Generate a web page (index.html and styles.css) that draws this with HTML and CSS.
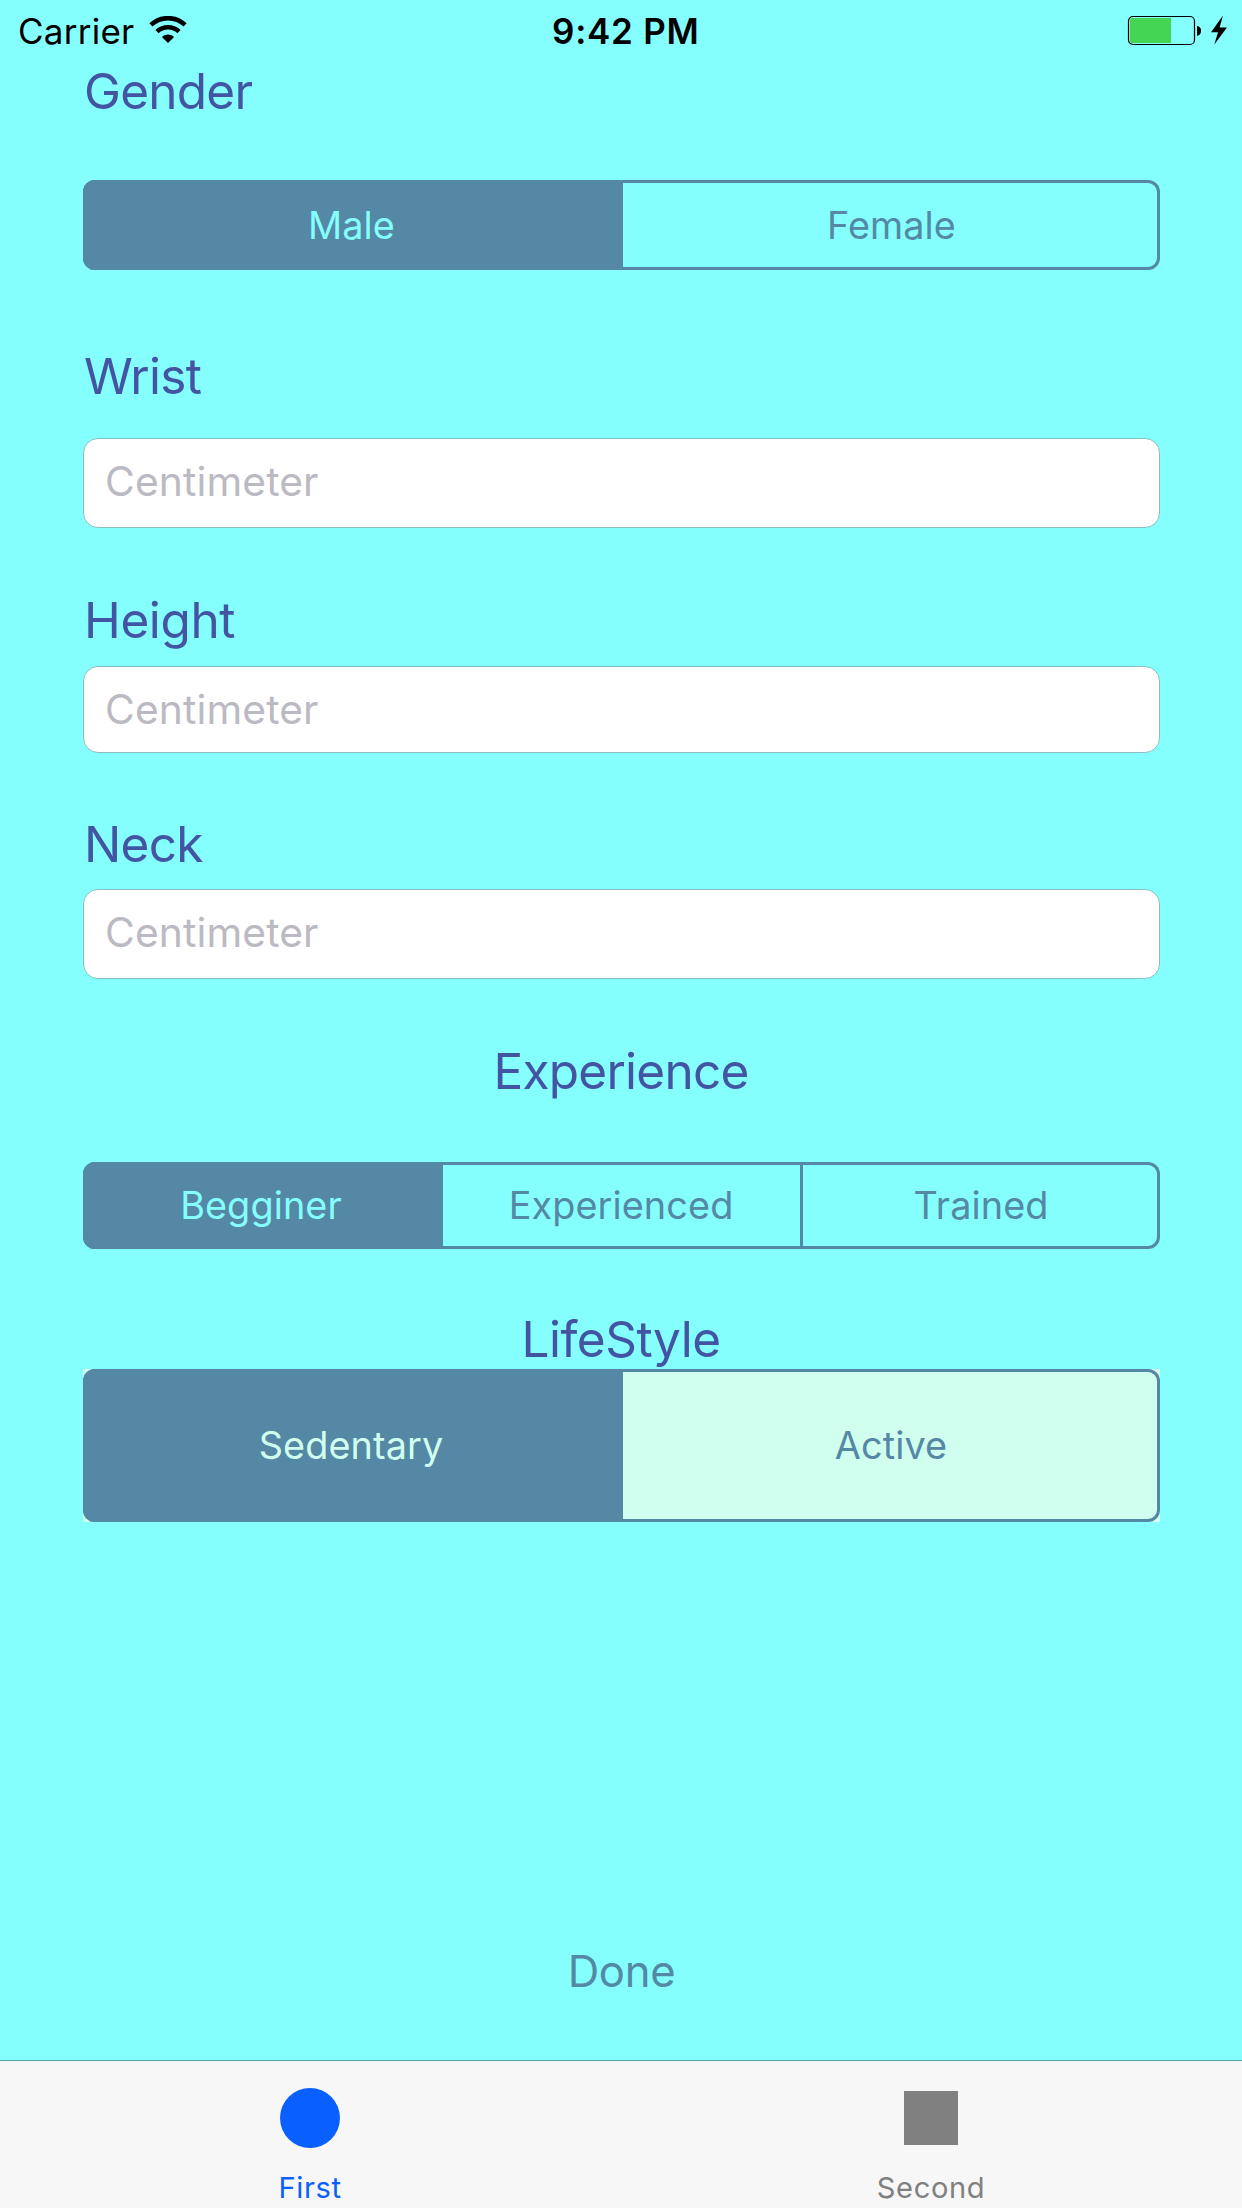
FILE: index.html
```
<!DOCTYPE html>
<html lang="en">
<head>
<meta charset="utf-8">
<title>Measurements</title>
<link rel="stylesheet" href="styles.css">
</head>
<body>
<div class="screen">
  <header class="status">
    <div class="status-left">
      <span>Carrier</span>
      <svg class="wifi" width="38" height="28" viewBox="0 0 38 28">
        <g fill="none" stroke="#000" stroke-width="4.6">
          <path d="M1.9 8.9A25 25 0 0 1 36.1 8.9"/>
          <path d="M8 15.6A16 16 0 0 1 30 15.6"/>
        </g>
        <path d="M12.9 20.9A9.2 9.2 0 0 1 25.1 20.9L19 27Z"/>
      </svg>
    </div>
    <span class="time">9:42 PM</span>
    <svg class="battery" width="100" height="31" viewBox="0 0 100 31">
      <rect x="1.5" y="1.5" width="66" height="28" rx="4.5" fill="none" stroke="#000" stroke-width="1.2"/>
      <path d="M5 3H44V28H5Q3 28 3 26V5Q3 3 5 3Z" fill="#44d553"/>
      <path d="M70 11Q74 11.5 74 15.7T70 21Z"/>
      <path d="M96 .5L84 17.2H91L87.3 29.5L100 12.5H92.6Z"/>
    </svg>
  </header>

  <main class="form">
    <h2 class="label gender-label">Gender</h2>
    <div class="segmented gender">
      <button class="segment selected">Male</button>
      <button class="segment">Female</button>
    </div>

    <label class="label wrist-label" for="wrist">Wrist</label>
    <input class="field wrist" id="wrist" type="text" placeholder="Centimeter">

    <label class="label height-label" for="height">Height</label>
    <input class="field height" id="height" type="text" placeholder="Centimeter">

    <label class="label neck-label" for="neck">Neck</label>
    <input class="field neck" id="neck" type="text" placeholder="Centimeter">

    <h2 class="label centered experience-label">Experience</h2>
    <div class="segmented experience">
      <button class="segment selected">Begginer</button>
      <button class="segment">Experienced</button>
      <button class="segment divided">Trained</button>
    </div>

    <h2 class="label centered lifestyle-label">LifeStyle</h2>
    <div class="lifestyle-back">
      <div class="segmented lifestyle">
        <button class="segment selected">Sedentary</button>
        <button class="segment">Active</button>
      </div>
    </div>

    <button class="done">Done</button>
  </main>

  <nav class="tabs">
    <a class="tab active">
      <svg class="tab-icon" width="60" height="60" viewBox="0 0 60 60"><circle cx="30" cy="30" r="30" fill="currentColor"/></svg>
      <span>First</span>
    </a>
    <a class="tab">
      <svg class="tab-icon" width="60" height="60" viewBox="0 0 60 60"><path d="M3 3H57V57H3Z" fill="currentColor"/></svg>
      <span>Second</span>
    </a>
  </nav>
</div>
</body>
</html>
```
FILE: styles.css
```
* {
  box-sizing: border-box;
}

body {
  margin: 0;
  font-family: Inter, "Liberation Sans", sans-serif;
  background: #84fffe;
}

button {
  padding: 0;
  border: 0;
  background: none;
  font-family: inherit;
}

.screen {
  display: flex;
  flex-direction: column;
  width: 1242px;
  height: 2208px;
  overflow: hidden;
}

/* Status bar */
.status {
  display: flex;
  flex: none;
  height: 60px;
  padding: 10px 13px 0 18px;
  font-size: 35px;
  line-height: 42px;
  color: #000;
}

.status-left {
  display: flex;
  width: 534px;
  letter-spacing: 0.25px;
}

.wifi {
  margin: 6px 0 0 15px;
}

.time {
  font-weight: 600;
  letter-spacing: 0.75px;
}

.battery {
  margin: 5px 2px 0 auto;
}

/* Form */
.form {
  display: flex;
  flex: 1;
  flex-direction: column;
  padding: 1px 82px 0 83px;
}

.label {
  display: block;
  height: 60px;
  margin: 0;
  padding-left: 1px;
  font-size: 49.5px;
  font-weight: 400;
  line-height: 60px;
  letter-spacing: -0.75px;
  color: #4354a3;
}

.height-label {
  letter-spacing: -0.4px;
}

.centered {
  padding: 0 1px 0 0;
  text-align: center;
}

.lifestyle-label {
  letter-spacing: -0.5px;
}

.segmented {
  display: flex;
  gap: 3px;
  overflow: hidden;
  border-radius: 12px;
  box-shadow: inset 0 0 0 3px #5488a4;
}

.segment {
  flex: 1;
  font-size: 37.8px;
  letter-spacing: 0.1px;
  color: #5488a4;
}

.selected {
  color: #84fffe;
  background: #5488a4;
  box-shadow: 3px 0 #5488a4;
}

.divided {
  box-shadow: -3px 0 #5488a4;
}

.gender {
  height: 90px;
  margin-top: 59px;
}

.wrist-label {
  margin-top: 76px;
}

.field {
  width: 100%;
  height: 90px;
  padding: 0 20px 4px 21px;
  border: 1px solid #8abfbf;
  border-radius: 15px;
  outline: 0;
  background: #fff;
  font: 40.8px Inter, "Liberation Sans", sans-serif;
  letter-spacing: 0.1px;
}

.field::placeholder {
  color: #bbbac2;
  opacity: 1;
}

.wrist {
  margin-top: 32px;
}

.height-label {
  margin-top: 62px;
}

.height {
  height: 87px;
  margin-top: 16px;
  padding-bottom: 1px;
}

.neck-label {
  margin-top: 61px;
}

.neck {
  margin-top: 15px;
}

.experience-label {
  margin-top: 62px;
}

.experience {
  height: 87px;
  margin-top: 61px;
}

.experience .segment,
.lifestyle .segment {
  padding: 0 1px 1px 0;
}

.lifestyle-label {
  margin-top: 60px;
}

.lifestyle-back {
  background: #d0ffef;
}

.lifestyle {
  height: 153px;
}

.lifestyle .selected {
  color: #d0ffef;
}

.done {
  align-self: center;
  height: 60px;
  margin-top: 420px;
  font-size: 43.6px;
  line-height: 60px;
  letter-spacing: -0.3px;
  color: #5488a4;
}

/* Tab bar */
.tabs {
  display: flex;
  flex: none;
  height: 148px;
  border-top: 1px solid #4fa5a5;
  background: #f7f7f7;
}

.tab {
  display: flex;
  flex: 1;
  flex-direction: column;
  align-items: center;
  gap: 22px;
  padding: 27px 1px 0 0;
  font-size: 29.1px;
  line-height: 35px;
  letter-spacing: 0.6px;
  color: #808080;
}

.tab-icon {
  flex: none;
}

.active {
  color: #0a60ff;
}
```
